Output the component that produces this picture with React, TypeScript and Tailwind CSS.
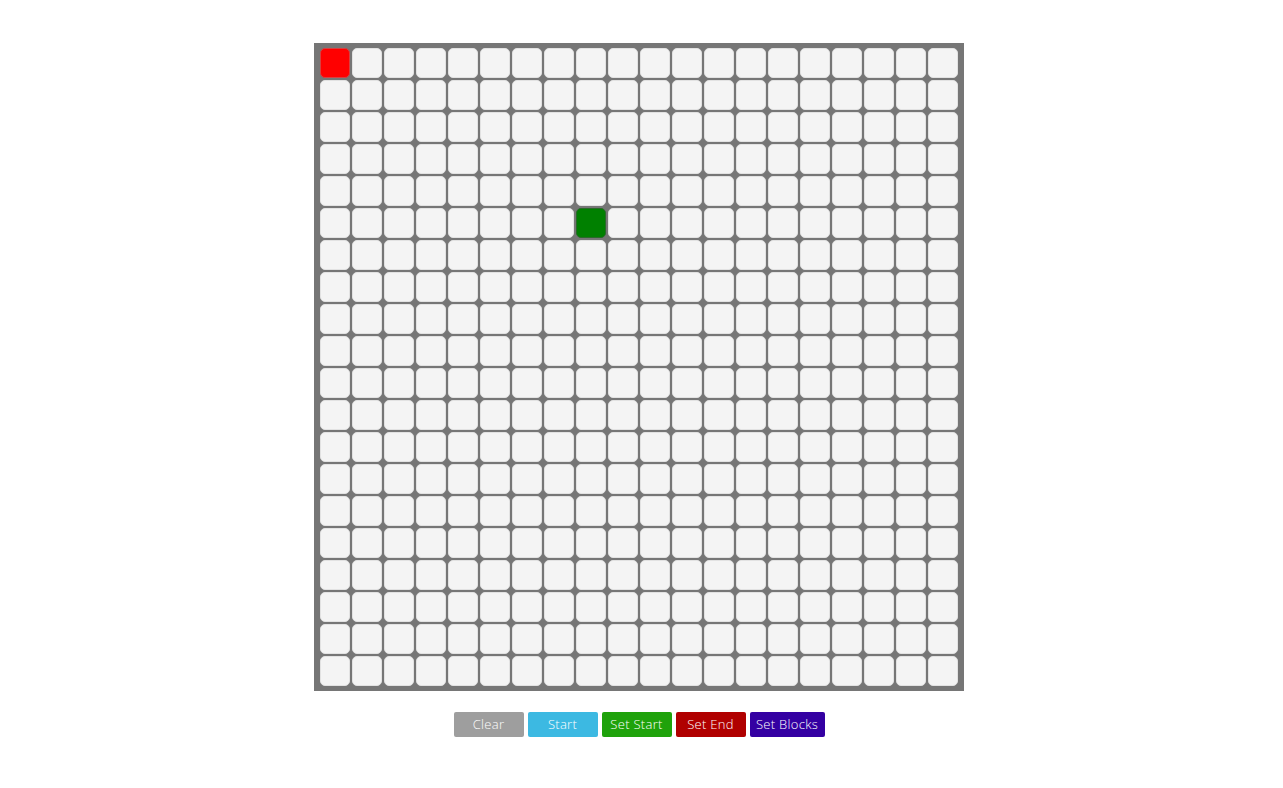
import React from 'react';

// 20x20 board, start cell top-left, end cell in row 5
const SIZE = 20;
const START = [0, 0];
const END = [5, 8];

const buttons = [
  { label: 'Clear', cls: 'bg-[#9e9e9e] w-[70px]' },
  { label: 'Start', cls: 'bg-[#3cb9e2] w-[70px]' },
  { label: 'Set Start', cls: 'bg-[#1fa20b] w-[70px]' },
  { label: 'Set End', cls: 'bg-[#b00000] w-[70px]' },
  { label: 'Set Blocks', cls: 'bg-[#3400a2] w-[75px]' },
];

const App: React.FC = () => {
  const cells = [];
  for (let r = 0; r < SIZE; r++) {
    for (let c = 0; c < SIZE; c++) {
      let color = 'bg-[#f4f4f4] border-[#e2e2e2]';
      if (r === START[0] && c === START[1]) color = 'bg-[#ff0000] border-[#d84040]';
      if (r === END[0] && c === END[1]) color = 'bg-[#008000] border-[#2a6a2a]';
      cells.push(<div key={`${r}-${c}`} className={`w-[30px] h-[30px] rounded-[5px] border ${color}`} />);
    }
  }

  return (
    <div className="min-h-screen bg-white flex flex-col items-center pt-[43px] pr-[5px] font-['Open_Sans',sans-serif]">
      {/* board */}
      <div className="w-[650px] h-[648px] bg-[#767676] px-[6px] py-[5px]">
        <div className="grid grid-cols-[repeat(20,30px)] gap-[2px]">{cells}</div>
      </div>

      {/* controls */}
      <div className="flex gap-[4px] mt-[21px]">
        {buttons.map((b) => (
          <button
            key={b.label}
            className={`${b.cls} h-[25px] rounded-[2px] text-white text-[13px] font-light leading-none tracking-[0.3px]`}
          >
            {b.label}
          </button>
        ))}
      </div>
    </div>
  );
};

export default App;
